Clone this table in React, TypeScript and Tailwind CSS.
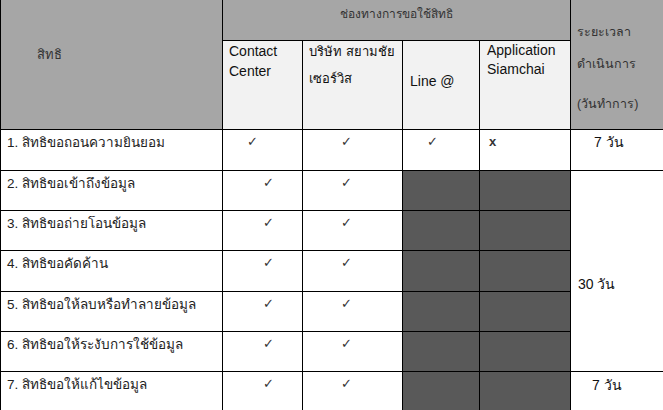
import React from 'react';

const thai = { fontFamily: '"Liberation Sans", "Noto Sans", "DejaVu Sans", sans-serif' };

type Row = {
  label: string;
  contact: boolean;
  company: boolean;
  line?: string;
  app?: string;
  h: string;
};

const rows: Row[] = [
  { label: '1. สิทธิขอถอนความยินยอม', contact: true, company: true, line: '✓', app: 'x', h: 'h-[41px]' },
  { label: '2. สิทธิขอเข้าถึงข้อมูล', contact: true, company: true, h: 'h-[40px]' },
  { label: '3. สิทธิขอถ่ายโอนข้อมูล', contact: true, company: true, h: 'h-[40px]' },
  { label: '4. สิทธิขอคัดค้าน', contact: true, company: true, h: 'h-[41px]' },
  { label: '5. สิทธิขอให้ลบหรือทำลายข้อมูล', contact: true, company: true, h: 'h-[40px]' },
  { label: '6. สิทธิขอให้ระงับการใช้ข้อมูล', contact: true, company: true, h: 'h-[40px]' },
  { label: '7. สิทธิขอให้แก้ไขข้อมูล', contact: true, company: true, h: 'h-[40px]' },
];

const cell = 'border border-black align-top';

export default function App() {
  return (
    <div className="w-[663px] h-[410px] overflow-hidden bg-white" style={thai}>
      <table className="border-collapse table-fixed w-[700px] text-[13px] text-[#222]">
        <colgroup>
          <col className="w-[222px]" />
          <col className="w-[80px]" />
          <col className="w-[100px]" />
          <col className="w-[77px]" />
          <col className="w-[91px]" />
          <col className="w-[130px]" />
        </colgroup>
        <thead>
          <tr className="h-[40px]">
            <td rowSpan={2} className="border-l border-r border-b border-black bg-[#a6a6a6] align-top pl-[36px] pt-[45px] text-[#333]">
              สิทธิ
            </td>
            <td colSpan={4} className="border-l border-r border-b border-black bg-[#a6a6a6] align-top text-center pt-[5px] text-[12px] text-[#333]">
              ช่องทางการขอใช้สิทธิ
            </td>
            <td rowSpan={2} className="border-l border-b border-black bg-[#a6a6a6] align-top pl-[6px] pt-[23px] text-[12.5px] text-[#333]">
              <div>ระยะเวลา</div>
              <div className="mt-[13px]">ดำเนินการ</div>
              <div className="mt-[21px]">(วันทำการ)</div>
            </td>
          </tr>
          <tr className="h-[89px]">
            <td className={`${cell} bg-[#f2f2f2] px-[6px] pt-0 text-[14px] leading-[20px] text-[#111]`}>
              Contact
              <br />
              Center
            </td>
            <td className={`${cell} bg-[#f2f2f2] px-[6px] text-[13px] leading-[27px] text-[#111]`}>
              <div className="-mt-[3px]">
                บริษัท สยามชัย
                <br />
                เซอร์วิส
              </div>
            </td>
            <td className="border border-black bg-[#f2f2f2] align-middle px-[7px] pb-[6px] text-[14px] text-[#111]">
              Line @
            </td>
            <td className={`${cell} bg-[#f2f2f2] px-[7px] text-[14px] leading-[19px] text-[#111]`}>
              Application
              <br />
              Siamchai
            </td>
          </tr>
        </thead>
        <tbody>
          {rows.map((r, i) => (
            <tr key={i} className={r.h}>
              <td className={`${cell} pl-[6px] pt-[3px] text-[13.5px]`}>{r.label}</td>
              <td className={`${cell} pt-[2px] text-[13px] text-[#333] ${i === 0 ? 'pl-[24px]' : 'pl-[40px]'}`}>
                {r.contact ? '✓' : ''}
              </td>
              <td className={`${cell} pt-[2px] pl-[38px] text-[13px] text-[#333]`}>{r.company ? '✓' : ''}</td>
              {i === 0 ? (
                <>
                  <td className={`${cell} pt-[2px] pl-[24px] text-[13px] text-[#333]`}>{r.line}</td>
                  <td className={`${cell} pt-[2px] pl-[9px] text-[13px] font-bold text-[#333]`}>{r.app}</td>
                  <td className="border-l border-b border-black align-top pt-[2px] pl-[23px] text-[14px] text-[#111]">7 วัน</td>
                </>
              ) : (
                <>
                  <td className="border border-black bg-[#595959]" />
                  <td className="border border-black bg-[#595959]" />
                  {i === 1 && (
                    <td rowSpan={5} className="border-l border-b border-black align-top pt-[103px] pl-[7px] text-[14px] text-[#111]">
                      30 วัน
                    </td>
                  )}
                  {i === 6 && (
                    <td className="border-l border-b border-black align-top pt-[3px] pl-[21px] text-[14px] text-[#111]">7 วัน</td>
                  )}
                </>
              )}
            </tr>
          ))}
        </tbody>
      </table>
    </div>
  );
}
